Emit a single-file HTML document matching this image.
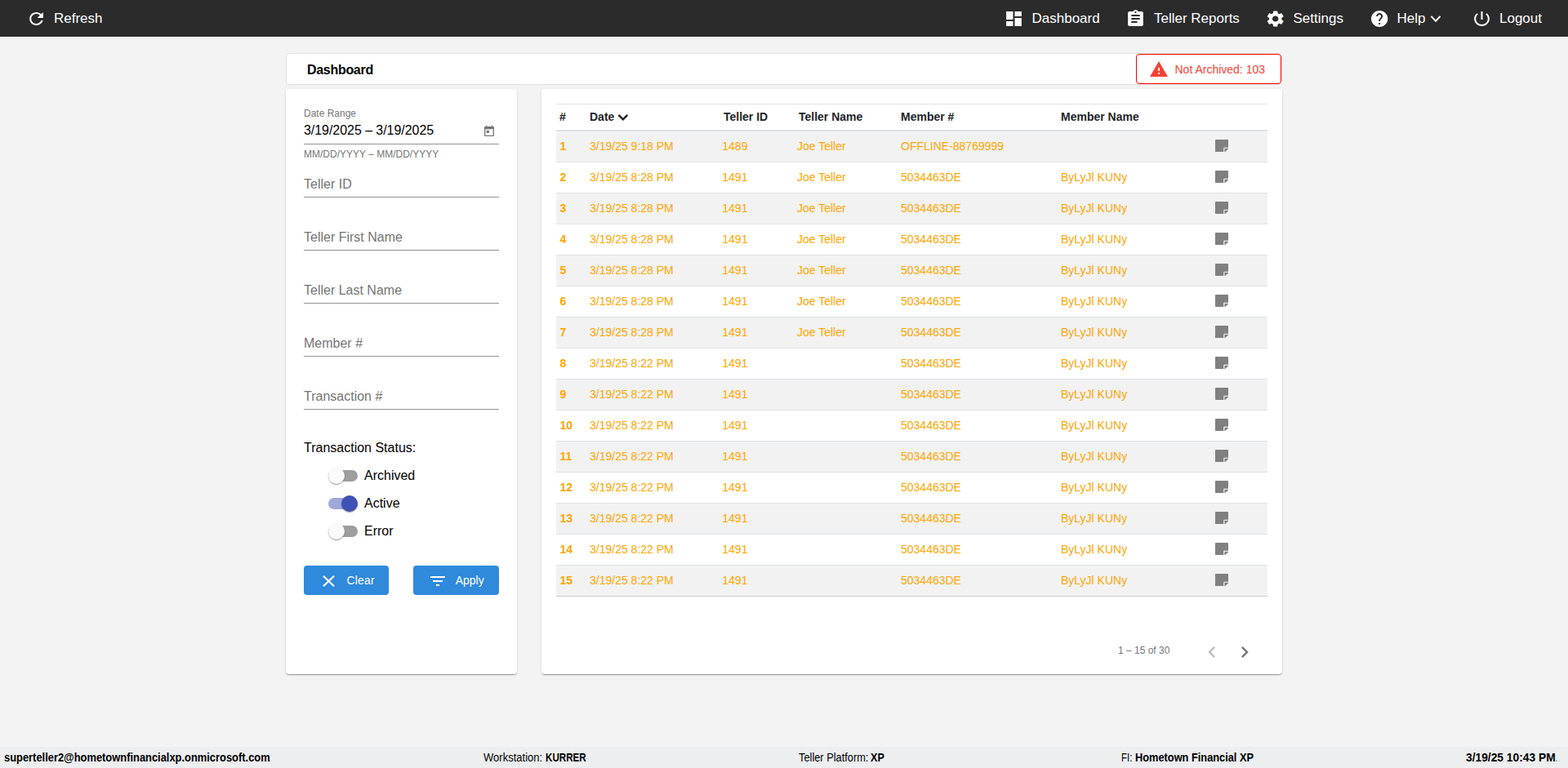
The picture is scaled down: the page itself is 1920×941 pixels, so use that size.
<!DOCTYPE html>
<html lang="en">
<head>
<meta charset="utf-8">
<title>Dashboard</title>
<style>
*{box-sizing:border-box}
html,body{margin:0;padding:0}
body{width:1920px;height:941px;overflow:hidden;background:#f3f3f3;font-family:"Liberation Sans",sans-serif;color:#000;position:relative}
.abs{position:absolute}
svg{display:block}
.ic{position:absolute;fill:currentColor}
.t{position:absolute;white-space:pre;line-height:1}
/* top bar */
#top{position:absolute;left:0;top:0;width:1920px;height:45px;background:#2b2b2b;color:#fff}
#topline{position:absolute;left:0;top:45px;width:1920px;height:1px;background:#fafafa}
#top .t{font-size:17px;top:14px}
/* title card */
#title{position:absolute;left:350px;top:65px;width:1220px;height:39px;background:#fff;border:1px solid #e0e0e0;border-radius:4px}
#title h1{position:absolute;left:25px;top:12px;margin:0;font-size:16px;line-height:1;font-weight:bold;letter-spacing:-0.3px;white-space:pre}
#badge{position:absolute;left:1391px;top:66px;width:178px;height:37px;border:1px solid #f00;border-radius:4px;background:#fff;color:#f44336}
#badge .t{font-size:14px;left:46.5px;top:11px}
.card{position:absolute;background:#fff;border-radius:4px;box-shadow:0 2px 1px -1px rgba(0,0,0,.2),0 1px 1px 0 rgba(0,0,0,.14),0 1px 3px 0 rgba(0,0,0,.12)}
#left{left:350px;top:109px;width:283px;height:717px}
#right{left:663px;top:109px;width:907px;height:717px}
.ul{position:absolute;left:22px;width:239px;height:1px;background:#949494}
.ph{font-size:16px;color:#757575;left:22px}
.tog{position:absolute;left:52px;width:36px;height:14px;border-radius:8px;background:#9e9e9e}
.tog i{position:absolute;left:0;top:-3px;width:20px;height:20px;border-radius:50%;background:#fafafa;box-shadow:0 2px 1px -1px rgba(0,0,0,.2),0 1px 1px 0 rgba(0,0,0,.14),0 1px 3px 0 rgba(0,0,0,.12)}
.tog.on{background:#9fa8da}
.tog.on i{left:16px;background:#3f51b5}
.tl{font-size:16px;left:96px}
.btn{position:absolute;top:584px;height:36px;border-radius:4px;background:#2f89dc;color:#fff;font-size:14px}
/* table */
table{position:absolute;left:18px;top:18px;width:871px;border-collapse:separate;border-spacing:0;font-size:14px;table-layout:fixed}
th,td{padding:0 0 2px 4px;text-align:left;white-space:nowrap;overflow:visible}
thead th{height:34px;border-top:1px solid #dee2e6;border-bottom:2px solid #dee2e6;font-weight:bold;color:#212529;vertical-align:middle}
tbody td{height:38px;border-bottom:1px solid #dee2e6;color:#ffa500;vertical-align:middle}
tbody tr:nth-child(odd){background:#f2f2f2}
td.c0{font-weight:bold;padding-left:4.5px}
td:nth-child(3){padding-left:3.3px}
tbody tr:last-child td{border-bottom-color:#cdcdcd}
th:nth-child(3),th:nth-child(4){padding-left:5px}
td:nth-child(4){padding-left:3px}
.note{fill:#808080;margin-left:0}
.chev{display:inline-block;vertical-align:-1px;margin-left:4px;fill:#212529}
/* footer */
#foot{position:absolute;left:0;top:915px;width:1920px;height:26px;background:#edeef0;font-size:14px;color:#000}
.f{transform-origin:0 0;display:block}
.f.b{font-weight:bold}
#foot .t{top:6px}
</style>
</head>
<body>
<div id="top">
  <svg class="ic" style="left:32px;top:11px" viewBox="0 0 24 24" width="25" preserveAspectRatio="none" height="24"><path d="M17.65 6.35C16.2 4.9 14.21 4 12 4c-4.42 0-7.99 3.58-7.99 8s3.57 8 7.99 8c3.73 0 6.84-2.55 7.73-6h-2.08c-.82 2.33-3.04 4-5.65 4-3.31 0-6-2.69-6-6s2.69-6 6-6c1.66 0 3.14.69 4.22 1.78L13 11h7V4l-2.35 2.35z"/></svg>
  <span class="t" style="left:66px">Refresh</span>
  <svg class="ic" style="left:1229px;top:11px" viewBox="0 0 24 24" width="25" preserveAspectRatio="none" height="24"><path d="M3 13h8V3H3v10zm0 8h8v-6H3v6zm10 0h8V11h-8v10zm0-18v6h8V3h-8z"/></svg>
  <span class="t" style="left:1263.5px">Dashboard</span>
  <svg class="ic" style="left:1378px;top:11px" viewBox="0 0 24 24" width="25" preserveAspectRatio="none" height="24"><path d="M19 3h-4.18C14.4 1.84 13.3 1 12 1c-1.3 0-2.4.84-2.82 2H5c-1.1 0-2 .9-2 2v14c0 1.1.9 2 2 2h14c1.1 0 2-.9 2-2V5c0-1.1-.9-2-2-2zm-7 0c.55 0 1 .45 1 1s-.45 1-1 1-1-.45-1-1 .45-1 1-1zm2 14H7v-2h7v2zm3-4H7v-2h10v2zm0-4H7V7h10v2z"/></svg>
  <span class="t" style="left:1413px">Teller Reports</span>
  <svg class="ic" style="left:1548.7px;top:11px" viewBox="0 0 24 24" width="25.4" preserveAspectRatio="none" height="24"><path d="M19.14 12.94c.04-.3.06-.61.06-.94 0-.32-.02-.64-.07-.94l2.03-1.58c.18-.14.23-.41.12-.61l-1.92-3.32c-.12-.22-.37-.29-.59-.22l-2.39.96c-.5-.38-1.03-.7-1.62-.94l-.36-2.54c-.04-.24-.24-.41-.48-.41h-3.84c-.24 0-.43.17-.47.41l-.36 2.54c-.59.24-1.13.57-1.62.94l-2.39-.96c-.22-.08-.47 0-.59.22L2.74 8.87c-.12.21-.08.47.12.61l2.03 1.58c-.05.3-.09.63-.09.94s.02.64.07.94l-2.03 1.58c-.18.14-.23.41-.12.61l1.92 3.32c.12.22.37.29.59.22l2.39-.96c.5.38 1.03.7 1.62.94l.36 2.54c.05.24.24.41.48.41h3.84c.24 0 .44-.17.47-.41l.36-2.54c.59-.24 1.13-.56 1.62-.94l2.39.96c.22.08.47 0 .59-.22l1.92-3.32c.12-.22.07-.47-.12-.61l-2.01-1.58zM12 15.6c-1.98 0-3.6-1.62-3.6-3.6s1.62-3.6 3.6-3.6 3.6 1.62 3.6 3.6-1.62 3.6-3.6 3.6z"/></svg>
  <span class="t" style="left:1583.5px">Settings</span>
  <svg class="ic" style="left:1677px;top:11px" viewBox="0 0 24 24" width="24.4" preserveAspectRatio="none" height="24"><path d="M12 2C6.48 2 2 6.48 2 12s4.48 10 10 10 10-4.48 10-10S17.52 2 12 2zm1 17h-2v-2h2v2zm2.07-7.75l-.9.92C13.45 12.9 13 13.5 13 15h-2v-.5c0-1.1.45-2.1 1.17-2.83l1.24-1.26c.37-.36.59-.86.59-1.41 0-1.1-.9-2-2-2s-2 .9-2 2H8c0-2.21 1.79-4 4-4s4 1.79 4 4c0 .88-.36 1.68-.93 2.25z"/></svg>
  <span class="t" style="left:1710.5px">Help</span>
  <svg class="ic" style="left:1750px;top:18px" viewBox="0 0 16 11" width="16" height="11"><path d="M2.4 1.9L8 7.7L13.6 1.9" fill="none" stroke="#fff" stroke-width="2"/></svg>
  <svg class="ic" style="left:1802px;top:11px" viewBox="0 0 24 24" width="25" preserveAspectRatio="none" height="24"><path d="M13 3h-2v10h2V3zm4.83 2.17l-1.42 1.42C17.99 7.86 19 9.81 19 12c0 3.87-3.13 7-7 7s-7-3.130-7-7c0-2.19 1.01-4.14 2.58-5.42L6.17 5.17C4.23 6.82 3 9.26 3 12c0 4.97 4.03 9 9 9s9-4.030 9-9c0-2.74-1.23-5.18-3.17-6.83z"/></svg>
  <span class="t" style="left:1836px">Logout</span>
</div>
<div id="topline"></div>

<div id="title"><h1>Dashboard</h1></div>
<div id="badge">
  <svg class="ic" style="left:14.8px;top:6px" viewBox="0 0 24 24" width="24" height="24"><path d="M1 21h22L12 2 1 21zm12-3h-2v-2h2v2zm0-4h-2v-4h2v4z"/></svg>
  <span class="t">Not Archived: 103</span>
</div>

<div class="card" id="left">
  <span class="t" style="left:22px;top:24px;font-size:12px;color:#757575">Date Range</span>
  <span class="t" style="left:22px;top:43px;font-size:16px;letter-spacing:-0.05px">3/19/2025 – 3/19/2025</span>
  <svg class="ic" style="left:241px;top:44px;color:#757575" viewBox="0 0 24 24" width="16" height="16"><path d="M19 3h-1V1h-2v2H8V1H6v2H5c-1.11 0-1.99.9-1.99 2L3 19c0 1.1.89 2 2 2h14c1.1 0 2-.9 2-2V5c0-1.1-.9-2-2-2zm0 16H5V8h14v11zM7 10h5v5H7z"/></svg>
  <div class="ul" style="top:67px"></div>
  <span class="t" style="left:22px;top:74px;font-size:12px;color:#757575">MM/DD/YYYY – MM/DD/YYYY</span>
  <span class="t ph" style="top:109px">Teller ID</span><div class="ul" style="top:132px"></div>
  <span class="t ph" style="top:174px">Teller First Name</span><div class="ul" style="top:197px"></div>
  <span class="t ph" style="top:239px">Teller Last Name</span><div class="ul" style="top:262px"></div>
  <span class="t ph" style="top:304px">Member #</span><div class="ul" style="top:327px"></div>
  <span class="t ph" style="top:369px">Transaction #</span><div class="ul" style="top:392px"></div>
  <span class="t" style="left:22px;top:432px;font-size:16px">Transaction Status:</span>
  <div class="tog" style="top:467px"><i></i></div><span class="t tl" style="top:466px">Archived</span>
  <div class="tog on" style="top:501px"><i></i></div><span class="t tl" style="top:500px">Active</span>
  <div class="tog" style="top:535px"><i></i></div><span class="t tl" style="top:534px">Error</span>
  <div class="btn" style="left:22px;width:104px">
    <svg class="ic" style="left:18.1px;top:7px" viewBox="0 0 24 24" width="25" preserveAspectRatio="none" height="24"><path d="M19 6.41L17.59 5 12 10.59 6.41 5 5 6.41 10.59 12 5 17.59 6.410 19 12 13.41 17.59 19 19 17.59 13.41 12z"/></svg>
    <span class="t" style="left:52.5px;top:11px;letter-spacing:0.15px">Clear</span>
  </div>
  <div class="btn" style="left:156px;width:105px">
    <svg class="ic" style="left:18px;top:7px" viewBox="0 0 24 24" width="24" height="24"><path d="M10 18h4v-2h-4v2zM3 6v2h18V6H3zm3 7h12v-2H6v2z"/></svg>
    <span class="t" style="left:51.7px;top:11px">Apply</span>
  </div>
</div>

<div class="card" id="right">
  <table>
    <colgroup><col style="width:37px"><col style="width:163px"><col style="width:92px"><col style="width:126px"><col style="width:196px"><col style="width:189px"><col></colgroup>
    <thead><tr><th>#</th><th>Date</th><th>Teller ID</th><th>Teller Name</th><th>Member #</th><th>Member Name</th><th></th></tr></thead>
    <tbody>
<tr><td class="c0">1</td><td>3/19/25 9:18 PM</td><td>1489</td><td>Joe Teller</td><td>OFFLINE-88769999</td><td></td><td class="ci"><svg class="note" viewBox="0 32 448 448" width="16" height="15.2" preserveAspectRatio="none"><path d="M312 320h136V56c0-13.3-10.7-24-24-24H24C10.7 32 0 42.7 0 56v400c0 13.3 10.7 24 24 24h264V344c0-13.2 10.8-24 24-24zm129 55l-98 98c-4.5 4.5-10.600 7-17 7h-6V352h128v6.1c0 6.3-2.500 12.400-7 16.900z"/></svg></td></tr>
<tr><td class="c0">2</td><td>3/19/25 8:28 PM</td><td>1491</td><td>Joe Teller</td><td>5034463DE</td><td>ByLyJl KUNy</td><td class="ci"><svg class="note" viewBox="0 32 448 448" width="16" height="15.2" preserveAspectRatio="none"><path d="M312 320h136V56c0-13.3-10.7-24-24-24H24C10.7 32 0 42.7 0 56v400c0 13.3 10.7 24 24 24h264V344c0-13.2 10.8-24 24-24zm129 55l-98 98c-4.5 4.5-10.600 7-17 7h-6V352h128v6.1c0 6.3-2.500 12.400-7 16.900z"/></svg></td></tr>
<tr><td class="c0">3</td><td>3/19/25 8:28 PM</td><td>1491</td><td>Joe Teller</td><td>5034463DE</td><td>ByLyJl KUNy</td><td class="ci"><svg class="note" viewBox="0 32 448 448" width="16" height="15.2" preserveAspectRatio="none"><path d="M312 320h136V56c0-13.3-10.7-24-24-24H24C10.7 32 0 42.7 0 56v400c0 13.3 10.7 24 24 24h264V344c0-13.2 10.8-24 24-24zm129 55l-98 98c-4.5 4.5-10.600 7-17 7h-6V352h128v6.1c0 6.3-2.500 12.400-7 16.900z"/></svg></td></tr>
<tr><td class="c0">4</td><td>3/19/25 8:28 PM</td><td>1491</td><td>Joe Teller</td><td>5034463DE</td><td>ByLyJl KUNy</td><td class="ci"><svg class="note" viewBox="0 32 448 448" width="16" height="15.2" preserveAspectRatio="none"><path d="M312 320h136V56c0-13.3-10.7-24-24-24H24C10.7 32 0 42.7 0 56v400c0 13.3 10.7 24 24 24h264V344c0-13.2 10.8-24 24-24zm129 55l-98 98c-4.5 4.5-10.600 7-17 7h-6V352h128v6.1c0 6.3-2.500 12.400-7 16.900z"/></svg></td></tr>
<tr><td class="c0">5</td><td>3/19/25 8:28 PM</td><td>1491</td><td>Joe Teller</td><td>5034463DE</td><td>ByLyJl KUNy</td><td class="ci"><svg class="note" viewBox="0 32 448 448" width="16" height="15.2" preserveAspectRatio="none"><path d="M312 320h136V56c0-13.3-10.7-24-24-24H24C10.7 32 0 42.7 0 56v400c0 13.3 10.7 24 24 24h264V344c0-13.2 10.8-24 24-24zm129 55l-98 98c-4.5 4.5-10.600 7-17 7h-6V352h128v6.1c0 6.3-2.500 12.400-7 16.900z"/></svg></td></tr>
<tr><td class="c0">6</td><td>3/19/25 8:28 PM</td><td>1491</td><td>Joe Teller</td><td>5034463DE</td><td>ByLyJl KUNy</td><td class="ci"><svg class="note" viewBox="0 32 448 448" width="16" height="15.2" preserveAspectRatio="none"><path d="M312 320h136V56c0-13.3-10.7-24-24-24H24C10.7 32 0 42.7 0 56v400c0 13.3 10.7 24 24 24h264V344c0-13.2 10.8-24 24-24zm129 55l-98 98c-4.5 4.5-10.600 7-17 7h-6V352h128v6.1c0 6.3-2.500 12.400-7 16.900z"/></svg></td></tr>
<tr><td class="c0">7</td><td>3/19/25 8:28 PM</td><td>1491</td><td>Joe Teller</td><td>5034463DE</td><td>ByLyJl KUNy</td><td class="ci"><svg class="note" viewBox="0 32 448 448" width="16" height="15.2" preserveAspectRatio="none"><path d="M312 320h136V56c0-13.3-10.7-24-24-24H24C10.7 32 0 42.7 0 56v400c0 13.3 10.7 24 24 24h264V344c0-13.2 10.8-24 24-24zm129 55l-98 98c-4.5 4.5-10.600 7-17 7h-6V352h128v6.1c0 6.3-2.500 12.400-7 16.900z"/></svg></td></tr>
<tr><td class="c0">8</td><td>3/19/25 8:22 PM</td><td>1491</td><td></td><td>5034463DE</td><td>ByLyJl KUNy</td><td class="ci"><svg class="note" viewBox="0 32 448 448" width="16" height="15.2" preserveAspectRatio="none"><path d="M312 320h136V56c0-13.3-10.7-24-24-24H24C10.7 32 0 42.7 0 56v400c0 13.3 10.7 24 24 24h264V344c0-13.2 10.8-24 24-24zm129 55l-98 98c-4.5 4.5-10.600 7-17 7h-6V352h128v6.1c0 6.3-2.500 12.400-7 16.900z"/></svg></td></tr>
<tr><td class="c0">9</td><td>3/19/25 8:22 PM</td><td>1491</td><td></td><td>5034463DE</td><td>ByLyJl KUNy</td><td class="ci"><svg class="note" viewBox="0 32 448 448" width="16" height="15.2" preserveAspectRatio="none"><path d="M312 320h136V56c0-13.3-10.7-24-24-24H24C10.7 32 0 42.7 0 56v400c0 13.3 10.7 24 24 24h264V344c0-13.2 10.8-24 24-24zm129 55l-98 98c-4.5 4.5-10.600 7-17 7h-6V352h128v6.1c0 6.3-2.500 12.400-7 16.900z"/></svg></td></tr>
<tr><td class="c0">10</td><td>3/19/25 8:22 PM</td><td>1491</td><td></td><td>5034463DE</td><td>ByLyJl KUNy</td><td class="ci"><svg class="note" viewBox="0 32 448 448" width="16" height="15.2" preserveAspectRatio="none"><path d="M312 320h136V56c0-13.3-10.7-24-24-24H24C10.7 32 0 42.7 0 56v400c0 13.3 10.7 24 24 24h264V344c0-13.2 10.8-24 24-24zm129 55l-98 98c-4.5 4.5-10.600 7-17 7h-6V352h128v6.1c0 6.3-2.500 12.400-7 16.900z"/></svg></td></tr>
<tr><td class="c0">11</td><td>3/19/25 8:22 PM</td><td>1491</td><td></td><td>5034463DE</td><td>ByLyJl KUNy</td><td class="ci"><svg class="note" viewBox="0 32 448 448" width="16" height="15.2" preserveAspectRatio="none"><path d="M312 320h136V56c0-13.3-10.7-24-24-24H24C10.7 32 0 42.7 0 56v400c0 13.3 10.7 24 24 24h264V344c0-13.2 10.8-24 24-24zm129 55l-98 98c-4.5 4.5-10.600 7-17 7h-6V352h128v6.1c0 6.3-2.500 12.400-7 16.900z"/></svg></td></tr>
<tr><td class="c0">12</td><td>3/19/25 8:22 PM</td><td>1491</td><td></td><td>5034463DE</td><td>ByLyJl KUNy</td><td class="ci"><svg class="note" viewBox="0 32 448 448" width="16" height="15.2" preserveAspectRatio="none"><path d="M312 320h136V56c0-13.3-10.7-24-24-24H24C10.7 32 0 42.7 0 56v400c0 13.3 10.7 24 24 24h264V344c0-13.2 10.8-24 24-24zm129 55l-98 98c-4.5 4.5-10.600 7-17 7h-6V352h128v6.1c0 6.3-2.500 12.400-7 16.900z"/></svg></td></tr>
<tr><td class="c0">13</td><td>3/19/25 8:22 PM</td><td>1491</td><td></td><td>5034463DE</td><td>ByLyJl KUNy</td><td class="ci"><svg class="note" viewBox="0 32 448 448" width="16" height="15.2" preserveAspectRatio="none"><path d="M312 320h136V56c0-13.3-10.7-24-24-24H24C10.7 32 0 42.7 0 56v400c0 13.3 10.7 24 24 24h264V344c0-13.2 10.8-24 24-24zm129 55l-98 98c-4.5 4.5-10.600 7-17 7h-6V352h128v6.1c0 6.3-2.500 12.400-7 16.900z"/></svg></td></tr>
<tr><td class="c0">14</td><td>3/19/25 8:22 PM</td><td>1491</td><td></td><td>5034463DE</td><td>ByLyJl KUNy</td><td class="ci"><svg class="note" viewBox="0 32 448 448" width="16" height="15.2" preserveAspectRatio="none"><path d="M312 320h136V56c0-13.3-10.7-24-24-24H24C10.7 32 0 42.7 0 56v400c0 13.3 10.7 24 24 24h264V344c0-13.2 10.8-24 24-24zm129 55l-98 98c-4.5 4.5-10.600 7-17 7h-6V352h128v6.1c0 6.3-2.500 12.400-7 16.900z"/></svg></td></tr>
<tr><td class="c0">15</td><td>3/19/25 8:22 PM</td><td>1491</td><td></td><td>5034463DE</td><td>ByLyJl KUNy</td><td class="ci"><svg class="note" viewBox="0 32 448 448" width="16" height="15.2" preserveAspectRatio="none"><path d="M312 320h136V56c0-13.3-10.7-24-24-24H24C10.7 32 0 42.7 0 56v400c0 13.3 10.7 24 24 24h264V344c0-13.2 10.8-24 24-24zm129 55l-98 98c-4.5 4.5-10.600 7-17 7h-6V352h128v6.1c0 6.3-2.500 12.400-7 16.900z"/></svg></td></tr>
    </tbody>
  </table>
  <svg class="ic" style="left:93px;top:30px" viewBox="0 0 14 10" width="14" height="10"><path d="M1.5 1.8L6.9 7.3L12.3 1.8" fill="none" stroke="#212529" stroke-width="2.5"/></svg>
  <span class="t" style="left:706px;top:682px;font-size:12px;color:#757575">1 – 15 of 30</span>
  <svg class="ic" style="left:807px;top:676px;color:#bdbdbd" viewBox="0 0 24 24" width="28" height="28"><path d="M15.41 7.41L14 6l-6 6 6 6 1.41-1.41L10.83 12z"/></svg>
  <svg class="ic" style="left:847px;top:676px;color:#757575" viewBox="0 0 24 24" width="28" height="28"><path d="M10 6L8.59 7.41 13.17 12l-4.58 4.59L10 18l6-6z"/></svg>
</div>

<div id="foot">
  <span class="t f b" style="left:5.3px;transform:scaleX(0.921)">superteller2@hometownfinancialxp.onmicrosoft.com</span>
  <span class="t f" style="left:591.9px;transform:scaleX(0.93)">Workstation:</span>
  <span class="t f b" style="left:667.9px;transform:scaleX(0.83)">KURRER</span>
  <span class="t f" style="left:978.1px;transform:scaleX(0.915)">Teller Platform:</span>
  <span class="t f b" style="left:1066.2px;transform:scaleX(0.9)">XP</span>
  <span class="t f" style="left:1372.8px;transform:scaleX(0.82)">FI:</span>
  <span class="t f b" style="left:1389.7px;transform:scaleX(0.914)">Hometown Financial XP</span>
  <span class="t f b" style="left:1795.3px;transform:scaleX(0.985)">3/19/25 10:43 PM</span>
  <span class="t" style="left:1904.6px;top:10px;font-size:10px;font-weight:bold;color:#5a7fa8;opacity:.7">.</span>
  <span class="t" style="left:1908px;top:10px;font-size:10px;font-weight:bold;color:#8fa3bd;opacity:.3">.</span>
</div>
</body>
</html>
